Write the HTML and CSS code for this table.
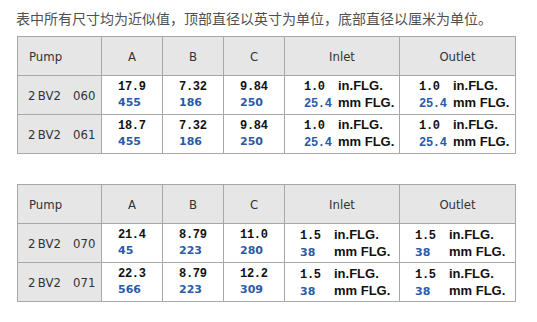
FILE: index.html
```html
<!DOCTYPE html>
<html>
<head>
<meta charset="utf-8">
<link rel="stylesheet" href="styles.css">
</head>
<body>
<p class="note">表中所有尺寸均为近似值，顶部直径以英寸为单位，底部直径以厘米为单位。</p>

<table class="spec">
  <colgroup>
    <col class="c-pump"><col class="c-dim"><col class="c-dim"><col class="c-dim"><col class="c-in"><col class="c-out">
  </colgroup>
  <tr class="head">
    <th class="pump">Pump</th><th>A</th><th>B</th><th>C</th><th>Inlet</th><th>Outlet</th>
  </tr>
  <tr>
    <td class="pump"><span class="model">2&thinsp;BV2</span><span>060</span></td>
    <td><div class="val"><span class="in">17.9</span><span class="mm">455</span></div></td>
    <td><div class="val"><span class="in">7.32</span><span class="mm">186</span></div></td>
    <td><div class="val"><span class="in">9.84</span><span class="mm">250</span></div></td>
    <td><div class="flg w1"><span class="in">1.0</span><span class="u">in.FLG.</span><span class="in blue">25.4</span><span class="u">mm FLG.</span></div></td>
    <td><div class="flg w1"><span class="in">1.0</span><span class="u">in.FLG.</span><span class="in blue">25.4</span><span class="u">mm FLG.</span></div></td>
  </tr>
  <tr>
    <td class="pump"><span class="model">2&thinsp;BV2</span><span>061</span></td>
    <td><div class="val"><span class="in">18.7</span><span class="mm">455</span></div></td>
    <td><div class="val"><span class="in">7.32</span><span class="mm">186</span></div></td>
    <td><div class="val"><span class="in">9.84</span><span class="mm">250</span></div></td>
    <td><div class="flg w1"><span class="in">1.0</span><span class="u">in.FLG.</span><span class="in blue">25.4</span><span class="u">mm FLG.</span></div></td>
    <td><div class="flg w1"><span class="in">1.0</span><span class="u">in.FLG.</span><span class="in blue">25.4</span><span class="u">mm FLG.</span></div></td>
  </tr>
</table>

<table class="spec second">
  <colgroup>
    <col class="c-pump"><col class="c-dim"><col class="c-dim"><col class="c-dim"><col class="c-in"><col class="c-out">
  </colgroup>
  <tr class="head">
    <th class="pump">Pump</th><th>A</th><th>B</th><th>C</th><th>Inlet</th><th>Outlet</th>
  </tr>
  <tr>
    <td class="pump"><span class="model">2&thinsp;BV2</span><span>070</span></td>
    <td><div class="val"><span class="in">21.4</span><span class="mm">45</span></div></td>
    <td><div class="val"><span class="in">8.79</span><span class="mm">223</span></div></td>
    <td><div class="val"><span class="in">11.0</span><span class="mm">280</span></div></td>
    <td><div class="flg w2"><span class="in">1.5</span><span class="u">in.FLG.</span><span class="mm">38</span><span class="u">mm FLG.</span></div></td>
    <td><div class="flg w2"><span class="in">1.5</span><span class="u">in.FLG.</span><span class="mm">38</span><span class="u">mm FLG.</span></div></td>
  </tr>
  <tr>
    <td class="pump"><span class="model">2&thinsp;BV2</span><span>071</span></td>
    <td><div class="val"><span class="in">22.3</span><span class="mm">566</span></div></td>
    <td><div class="val"><span class="in">8.79</span><span class="mm">223</span></div></td>
    <td><div class="val"><span class="in">12.2</span><span class="mm">309</span></div></td>
    <td><div class="flg w2"><span class="in">1.5</span><span class="u">in.FLG.</span><span class="mm">38</span><span class="u">mm FLG.</span></div></td>
    <td><div class="flg w2"><span class="in">1.5</span><span class="u">in.FLG.</span><span class="mm">38</span><span class="u">mm FLG.</span></div></td>
  </tr>
</table>
</body>
</html>
```

FILE: styles.css
```css
html, body {
  margin: 0;
  padding: 0;
  background: #ffffff;
}
body {
  padding: 0 0 0 17px;
}
.note {
  margin: 0;
  padding: 9px 0 0 0;
  height: 27px;
  margin-left: -1px;
  font-family: "Noto Sans CJK SC", sans-serif;
  font-size: 14px;
  line-height: 18px;
  color: #505050;
}
.spec {
  border-collapse: collapse;
  table-layout: fixed;
  width: 499px;
}
.second {
  margin-top: 30px;
}
.c-pump { width: 84px; }
.c-dim { width: 61px; }
.c-in { width: 115px; }
.c-out { width: 116px; }
.spec th, .spec td {
  border: 1px solid #a8a8a8;
  height: 38px;
  padding: 0;
  vertical-align: middle;
}
.spec th {
  background: #e6e6e6;
  font-family: "DejaVu Sans", sans-serif;
  font-stretch: condensed;
  font-weight: normal;
  font-size: 13px;
  color: #333333;
  text-align: center;
}
.spec th.pump, .spec td.pump {
  text-align: left;
  padding-left: 11px;
  background: #e6e6e6;
}
.spec td.pump {
  font-family: "DejaVu Sans", sans-serif;
  font-stretch: condensed;
  font-size: 13px;
  color: #333333;
  padding-left: 10px;
}
.model {
  display: inline-block;
  width: 45px;
}
.val {
  display: flex;
  flex-direction: column;
  align-items: flex-start;
  width: 34px;
  margin-left: 16px;
}
.in {
  font-family: "Liberation Mono", monospace;
  font-weight: bold;
  font-size: 12px;
  letter-spacing: -0.3px;
  line-height: 15px;
  color: #111111;
  white-space: pre;
}
.blue {
  color: #2a5aa8;
}
.mm {
  font-family: "DejaVu Sans", sans-serif;
  font-weight: bold;
  font-size: 11px;
  line-height: 15px;
  color: #2a5aa8;
}
.flg {
  display: grid;
  grid-template-columns: 34px auto;
  align-items: baseline;
}
.w1 { margin-left: 19px; }
.w2 { margin-left: 15px; }
.u {
  font-family: "Liberation Sans", Arial, sans-serif;
  font-weight: bold;
  font-size: 13px;
  line-height: 15px;
  color: #111111;
}
```
